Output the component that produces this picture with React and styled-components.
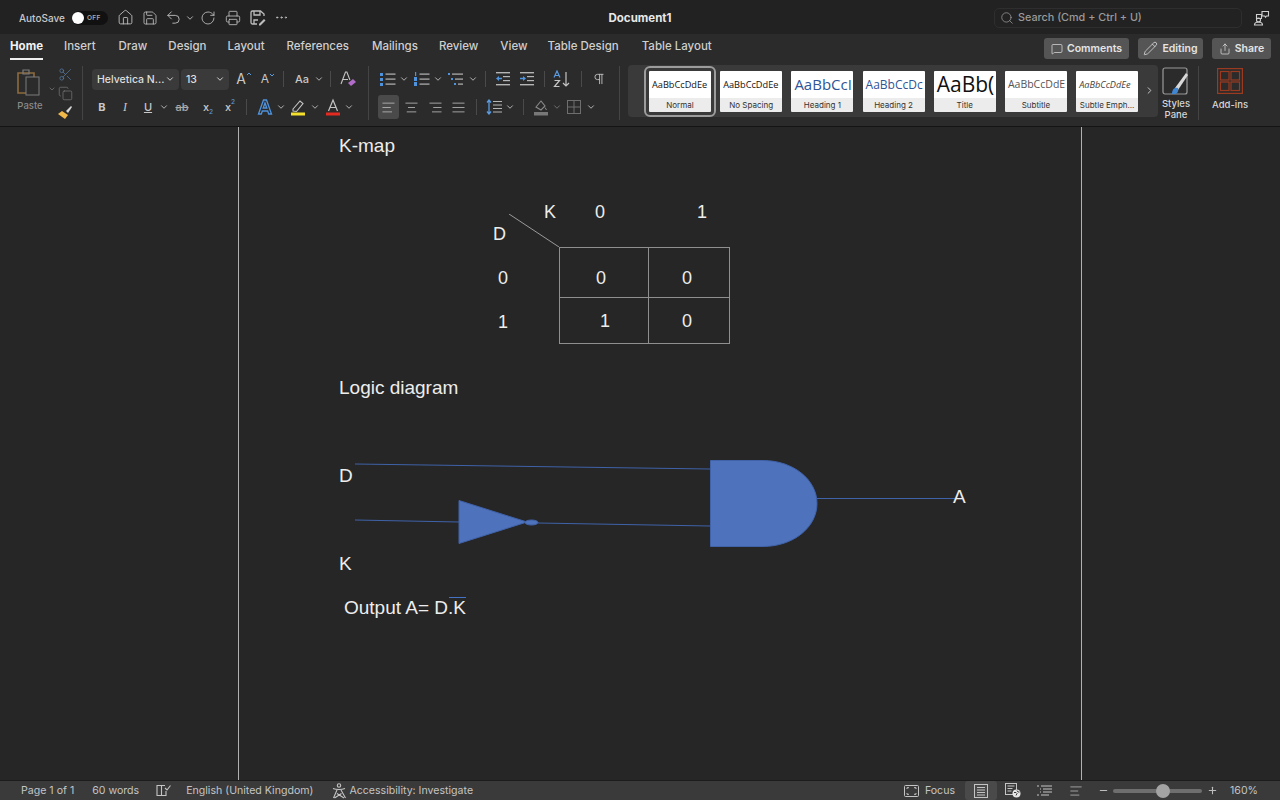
import React from "react";
import styled, { createGlobalStyle } from "styled-components";
import {
  House,
  Save,
  Undo2,
  RotateCw,
  Printer,
  Ellipsis,
  Search,
  MessageSquare,
  Pencil,
  Share,
  ChevronDown,
  ChevronRight,
  Scissors,
  Copy,
  AlignLeft,
  AlignCenter,
  AlignRight,
  AlignJustify,
  Pilcrow,
  Minus,
  Plus,
} from "lucide-react";

const GlobalStyle = createGlobalStyle`
  html, body {
    margin: 0;
    height: 100%;
    background: #262626;
    overflow: hidden;
  }
  body {
    font-family: Inter, "Liberation Sans", sans-serif;
    -webkit-font-smoothing: antialiased;
  }
`;

const Window = styled.div`
  width: 1280px;
  height: 800px;
  display: flex;
  flex-direction: column;
  overflow: hidden;
`;

/* title bar */
const TitleBar = styled.header`
  height: 34px;
  flex: none;
  box-sizing: border-box;
  padding: 1px 0 0 19px;
  background: #222222;
  display: flex;
  align-items: center;
  color: #c9c9c9;
  position: relative;
`;

const AutoSave = styled.span`
  font-size: 10px;
  font-weight: 500;
  width: 53px;
`;

const Toggle = styled.div`
  width: 36px;
  height: 14px;
  border-radius: 7px;
  background: #111;
  display: flex;
  align-items: center;
  gap: 3px;
  margin-right: 4px;
  color: #aaa;
  font-size: 6.5px;
  font-weight: 600;
  letter-spacing: 0.3px;
`;

const Knob = styled.span`
  width: 12px;
  height: 12px;
  border-radius: 50%;
  background: #fff;
`;

const Slot = styled.div`
  width: ${(p) => p.$w}px;
  height: ${(p) => p.$h || 24}px;
  flex: none;
  display: flex;
  align-items: center;
  justify-content: center;
  color: ${(p) => p.$color || "#bdbdbd"};
  background: ${(p) => (p.$active ? "#4a4a4a" : "transparent")};
  border-radius: ${(p) => (p.$active ? "3px" : "0")};
  opacity: ${(p) => p.$dim || 1};
  & > svg {
    flex: none;
  }
`;

const PushRight = styled.div`
  margin-left: auto;
`;

const DocName = styled.div`
  position: absolute;
  left: 0;
  right: 0;
  text-align: center;
  font-size: 11.5px;
  font-weight: 700;
  color: #e8e8e8;
  pointer-events: none;
`;

const SearchBox = styled.div`
  margin-left: auto;
  width: 248px;
  height: 20px;
  box-sizing: border-box;
  border: 1px solid #2e2e2e;
  border-radius: 5px;
  display: flex;
  align-items: center;
  gap: 4px;
  padding-left: 5px;
  font-size: 10.8px;
  font-weight: 500;
  color: #9a9a9a;
`;

const CollabSlot = styled.div`
  width: 38px;
  display: flex;
  justify-content: center;
  color: #d0d0d0;
`;

/* tabs */
const TabBar = styled.nav`
  height: 28px;
  flex: none;
  background: #2b2b2b;
  display: flex;
  align-items: flex-start;
  padding: 0 9px 0 10px;
`;

const Tab = styled.div`
  height: 22px;
  margin-top: 2px;
  margin-right: ${(p) => p.$gap}px;
  font-size: 11.5px;
  line-height: 20px;
  font-weight: ${(p) => (p.$active ? 700 : 500)};
  color: ${(p) => (p.$active ? "#f2f2f2" : "#cfcfcf")};
  border-bottom: 2px solid ${(p) => (p.$active ? "#efefef" : "transparent")};
  white-space: nowrap;
`;

const TabActions = styled.div`
  margin-left: auto;
  display: flex;
  gap: 9px;
  padding-top: 4px;
`;

const ActionButton = styled.div`
  width: ${(p) => p.$w}px;
  height: 21px;
  background: #555555;
  border-radius: 3px;
  display: flex;
  align-items: center;
  justify-content: center;
  gap: 4px;
  font-size: 10.5px;
  font-weight: 600;
  color: #e4e4e4;
`;

/* ribbon */
const Ribbon = styled.section`
  height: 65px;
  flex: none;
  box-sizing: border-box;
  background: #2b2b2b;
  border-bottom: 1px solid #141414;
  display: flex;
  align-items: flex-start;
`;

const Clipboard = styled.div`
  width: 82px;
  flex: none;
  height: 56px;
  margin-top: 4px;
  padding-left: 12px;
  box-sizing: border-box;
  display: flex;
`;

const PasteBlock = styled.div`
  width: 36px;
  flex: none;
  display: flex;
  flex-direction: column;
  align-items: center;
  color: #8a8a8a;
  font-size: 9.5px;
  font-weight: 500;
  gap: 4px;
  padding-top: 2px;
`;

const PasteChevron = styled.div`
  width: 8px;
  flex: none;
  padding-top: 11px;
  color: #7c7c7c;
`;

const ClipTools = styled.div`
  width: 18px;
  flex: none;
  padding-top: 1px;
  display: flex;
  flex-direction: column;
  align-items: center;
  gap: 4px;
  color: #7c7c7c;
`;

const GroupLine = styled.div`
  width: 1px;
  height: 54px;
  margin-top: 4px;
  flex: none;
  background: #444;
`;

const Group = styled.div`
  width: ${(p) => p.$w}px;
  margin-left: ${(p) => p.$left}px;
  flex: none;
  display: flex;
  flex-direction: column;
  gap: 4px;
  padding-top: 5px;
`;

const ToolRow = styled.div`
  display: flex;
  align-items: center;
  height: 24px;
`;

const Select = styled.div`
  width: ${(p) => p.$w}px;
  height: 21px;
  margin-right: ${(p) => p.$mr || 0}px;
  flex: none;
  box-sizing: border-box;
  background: #3a3a3a;
  border-radius: 4px;
  padding: 0 4px 0 5px;
  display: flex;
  align-items: center;
  justify-content: space-between;
  font-size: 10.5px;
  font-weight: 500;
  color: #dedede;
`;

const TinySep = styled.span`
  width: 1px;
  height: 16px;
  background: #4a4a4a;
`;

const Letter = styled.span`
  font-family: ${(p) => (p.$serif ? '"Liberation Serif", serif' : "Inter, sans-serif")};
  font-size: ${(p) => p.$size || 11}px;
  font-weight: ${(p) => p.$weight || 500};
  font-style: ${(p) => (p.$italic ? "italic" : "normal")};
  text-decoration: ${(p) => p.$deco || "none"};
  color: ${(p) => p.$color || "#c8c8c8"};
  position: relative;
  line-height: 1;
`;

const Script = styled.sub`
  position: absolute;
  left: 100%;
  ${(p) => (p.$up ? "top: -3px;" : "bottom: -3px;")}
  font-size: 6.5px;
  color: #5b9be0;
  line-height: 1;
`;

const Caret = styled.svg`
  position: absolute;
  left: 100%;
  top: 0;
`;

const Gallery = styled.div`
  width: 530px;
  height: 52px;
  margin: 3px 0 0 8px;
  flex: none;
  box-sizing: border-box;
  background: #3a3a3a;
  border-radius: 4px;
  display: flex;
  align-items: center;
  gap: 9.2px;
  padding-left: 21px;
  position: relative;
`;

const StyleCard = styled.div`
  width: 62px;
  height: 41px;
  flex: none;
  background: linear-gradient(#ffffff 65%, #ececec 65%);
  border-radius: 1px;
  display: flex;
  flex-direction: column;
  align-items: center;
  overflow: hidden;
  outline: ${(p) => (p.$selected ? "2px solid #9c9c9c" : "none")};
  outline-offset: 3px;
`;

const StylePreview = styled.div`
  height: 27px;
  width: 100%;
  box-sizing: border-box;
  display: flex;
  align-items: center;
  padding-left: 3px;
  white-space: nowrap;
  overflow: hidden;
  font-family: "Open Sans", "Liberation Sans", sans-serif;
  font-size: ${(p) => p.$size}px;
  font-style: ${(p) => (p.$italic ? "italic" : "normal")};
  color: ${(p) => p.$color};
`;

const StyleName = styled.div`
  font-size: 8px;
  font-weight: 400;
  color: #333;
  line-height: 14px;
  white-space: nowrap;
`;

const GalleryMore = styled.div`
  position: absolute;
  right: 3px;
  top: 20px;
  color: #d0d0d0;
  display: flex;
`;

const PaneButton = styled.div`
  width: 36px;
  margin-right: 4px;
  flex: none;
  padding-top: 5px;
  display: flex;
  flex-direction: column;
  align-items: center;
  text-align: center;
  font-size: 9.5px;
  font-weight: 500;
  line-height: 11px;
  color: #d6d6d6;
`;

const PaneIconBox = styled.div`
  height: 31px;
`;

const AddinsButton = styled(PaneButton)`
  width: 62px;
  margin: 0;
  padding-top: 6px;
`;

/* document */
const DocArea = styled.main`
  flex: 1;
  min-height: 0;
  background: #262626;
  padding-left: 238px;
`;

const Page = styled.article`
  width: 844px;
  height: 100%;
  box-sizing: border-box;
  border-left: 1px solid #b0b0b0;
  border-right: 1px solid #b0b0b0;
  padding: 7px 0 0 100px;
  font-family: "Liberation Sans", Arial, sans-serif;
  color: #ededed;
`;

const Heading = styled.p`
  margin: 0;
  font-size: 19px;
  line-height: 24px;
`;

const KMap = styled.div`
  margin: 42px 0 32px 156px;
  display: grid;
  grid-template-columns: 64px 89px 82px;
  grid-template-rows: 47px 51px 46px;
  font-size: 18px;
`;

const Corner = styled.div`
  position: relative;
`;

const CornerLabel = styled.span`
  position: absolute;
  left: ${(p) => p.$x}px;
  top: ${(p) => p.$y}px;
  line-height: 22px;
`;

const Diagonal = styled.svg`
  position: absolute;
  left: 14px;
  top: 14px;
`;

const HeadCell = styled.div`
  padding: 1px 0 0 ${(p) => p.$pad}px;
  line-height: 22px;
`;

const SideCell = styled.div`
  display: flex;
  align-items: center;
  padding-left: 3px;
  padding-top: ${(p) => (p.$top ? 12 : 2)}px;
`;

const Cell = styled.div`
  display: flex;
  align-items: center;
  padding-left: ${(p) => p.$pad}px;
  padding-top: ${(p) => (p.$top ? 12 : 2)}px;
  border: solid #8f8f8f;
  border-width: ${(p) => (p.$top ? "1px" : "0")} ${(p) => (p.$right ? "1px" : "0")} 1px 1px;
`;

const Diagram = styled.div`
  position: relative;
  width: 640px;
  height: 190px;
  margin-top: 40px;
`;

const Wires = styled.svg`
  position: absolute;
  inset: 0;
`;

const PinLabel = styled.span`
  position: absolute;
  left: ${(p) => p.$x}px;
  top: ${(p) => p.$y}px;
  font-size: 19px;
  line-height: 22px;
`;

const Formula = styled.p`
  margin: -34px 0 0 5px;
  font-size: 19px;
  line-height: 24px;
`;

const Barred = styled.span`
  border-top: 1px solid #4472c4;
  display: inline-block;
  margin-left: -4px;
  padding-left: 4px;
  line-height: 20px;
  height: 20px;
`;

/* status bar */
const StatusBar = styled.footer`
  height: 20px;
  flex: none;
  box-sizing: border-box;
  background: #3a3a3a;
  border-top: 1px solid #1c1c1c;
  display: flex;
  align-items: center;
  font-size: 10.6px;
  color: #c4c4c4;
  padding-left: 21px;
`;

const StatusText = styled.span`
  margin-left: ${(p) => p.$ml || 0}px;
  margin-right: ${(p) => p.$mr || 0}px;
  white-space: nowrap;
`;

const ZoomTrack = styled.div`
  width: 89px;
  height: 4px;
  border-radius: 2px;
  background: #6e6e6e;
  position: relative;
  flex: none;
`;

const ZoomThumb = styled.span`
  position: absolute;
  left: 43px;
  top: -5px;
  width: 14px;
  height: 14px;
  border-radius: 50%;
  background: #a3a3a3;
`;

const Chev = ({ size = 10 }) => <ChevronDown size={size} strokeWidth={2.2} />;

const GrowFont = ({ size, down }) => (
  <Letter $size={size} $weight={400}>
    A
    <Caret width="6" height="4" viewBox="0 0 6 4" fill="none">
      <path d={down ? "M1 1l2 2 2-2" : "M1 3l2-2 2 2"} stroke="#5b9be0" strokeWidth="1" />
    </Caret>
  </Letter>
);

const CollabIcon = () => (
  <svg width="17" height="17" viewBox="0 0 17 17" fill="none" stroke="currentColor" strokeWidth="1.1">
    <path d="M9 2.500h6.500v4.500h-2l-1 1.200-.7-1.200h-2.800z" />
    <path d="M3.500 5.500h5v4h-5z" />
    <circle cx="5.500" cy="11" r="2" />
    <path d="M1.500 16c0-2 1.600-3 4-3s4 1 4 3z" />
  </svg>
);

const FileEdit = () => (
  <svg width="17" height="17" viewBox="0 0 17 17" fill="none" stroke="currentColor" strokeWidth="1.3">
    <path d="M8 15H3.500A1.500 1.500 0 0 1 2 13.500v-10A1.500 1.500 0 0 1 3.500 2h8L15 5v2" />
    <path d="M5 2v4h6V2M5 15v-4h4" />
    <path d="m10 15 5-5 1.500 1.500-5 5H10z" fill="currentColor" stroke="none" />
  </svg>
);

const BlueLetterA = () => (
  <svg width="18" height="18" viewBox="0 0 18 18" fill="none">
    <path d="M2.500 16 7.500 2h3l5 14h-2.800l-1-3H6.300l-1 3zM7.200 10h3.600L9 5z" stroke="#4f93de" strokeWidth="1.3" />
  </svg>
);

const Highlighter = () => (
  <svg width="16" height="18" viewBox="0 0 16 18" fill="none">
    <path d="M3 11 10 3l3 2.500-6.500 8L3 13z" stroke="#c4c4c4" strokeWidth="1.1" />
    <rect x="1" y="14.500" width="14" height="3" fill="#f5e12d" />
  </svg>
);

const FontColor = () => (
  <svg width="16" height="18" viewBox="0 0 16 18" fill="none">
    <path d="M3.500 13 8 2l4.500 11M5 9.500h6" stroke="#c4c4c4" strokeWidth="1.2" />
    <rect x="1" y="14.500" width="14" height="3" fill="#e32b21" />
  </svg>
);

const ClearFormat = () => (
  <svg width="18" height="18" viewBox="0 0 18 18" fill="none">
    <path d="M2 14 6.500 2h1.400l3 8M4 9.500h5" stroke="#c4c4c4" strokeWidth="1.1" />
    <path d="m9 13 5-4 3 3-5 4z" fill="#b06cc8" />
  </svg>
);

const Bullets = () => (
  <svg width="16" height="15" viewBox="0 0 16 15">
    {[2, 7, 12].map((y) => (
      <g key={y}>
        <rect x="0" y={y - 1} width="3" height="3" fill="#4f93de" />
        <rect x="5.500" y={y - 0.5} width="10" height="1.2" fill="#b5b5b5" />
      </g>
    ))}
  </svg>
);

const Numbered = () => (
  <svg width="16" height="15" viewBox="0 0 16 15">
    {[2, 7, 12].map((y, i) => (
      <g key={y}>
        <rect x={i === 0 ? 1 : 0} y={y - 2} width={i === 0 ? 1.2 : 3} height="4" fill="#4f93de" />
        <rect x="5.500" y={y - 0.5} width="10" height="1.2" fill="#b5b5b5" />
      </g>
    ))}
  </svg>
);

const MultiLevel = () => (
  <svg width="16" height="15" viewBox="0 0 16 15">
    <rect x="0" y="1" width="2" height="2" fill="#4f93de" />
    <rect x="4" y="1.500" width="11" height="1.2" fill="#b5b5b5" />
    <rect x="3" y="6" width="2" height="2" fill="#4f93de" />
    <rect x="7" y="6.500" width="8" height="1.2" fill="#b5b5b5" />
    <rect x="6" y="11" width="2" height="2" fill="#4f93de" />
    <rect x="10" y="11.500" width="5" height="1.2" fill="#b5b5b5" />
  </svg>
);

const Indent = ({ flip }) => (
  <svg width="14" height="14" viewBox="0 0 14 14">
    <rect y="0" width="14" height="1.4" fill="#b5b5b5" />
    <rect x="7" y="4" width="7" height="1.2" fill="#b5b5b5" />
    <rect x="7" y="8" width="7" height="1.2" fill="#b5b5b5" />
    <rect y="12" width="14" height="1.4" fill="#b5b5b5" />
    <path d={flip ? "M6 6.500 3 4v1.800H0v1.400h3V9z" : "M0 6.500 3 4v1.800h3v1.400H3V9z"} fill="#4f93de" />
  </svg>
);

const Sort = () => (
  <svg width="18" height="18" viewBox="0 0 18 18" fill="none">
    <path d="M1 7.500 4 1l3 6.500M2 5.500h4" stroke="#5b9be0" strokeWidth="1.2" />
    <path d="M1.500 10.500h5L1.500 16.500h5" stroke="#c4c4c4" strokeWidth="1.2" />
    <path d="M13 2v14m-3-3 3 3 3-3" stroke="#c4c4c4" strokeWidth="1.2" />
  </svg>
);

const LineSpacing = () => (
  <svg width="16" height="16" viewBox="0 0 16 16" fill="none">
    <path d="M3 1v14M1 3.500 3 1l2 2.500M1 12.500 3 15l2-2.500" stroke="#5b9be0" strokeWidth="1.3" />
    <path d="M7 2.500h9M7 6h9M7 9.500h9M7 13h9" stroke="#b5b5b5" strokeWidth="1.2" />
  </svg>
);

const FillBucket = () => (
  <svg width="16" height="17" viewBox="0 0 16 17" fill="none">
    <path d="m3 8 5-6 4 5-4 4z" stroke="#8a8a8a" strokeWidth="1.1" />
    <path d="M12 8.500 13.500 11" stroke="#8a8a8a" />
    <rect x="1" y="13" width="14" height="3.500" fill="#787878" />
  </svg>
);

const Borders = () => (
  <svg width="14" height="14" viewBox="0 0 14 14" fill="none" stroke="#6e6e6e">
    <rect x="0.500" y="0.500" width="13" height="13" />
    <path d="M7 0v14M0 7h14" />
  </svg>
);

const Strike = () => (
  <Letter $size={11} $color="#a8a8a8" $deco="line-through">
    ab
  </Letter>
);

const PasteIcon = () => (
  <svg width="26" height="28" viewBox="0 0 26 28" fill="none">
    <path d="M1 5h16v20H1z" stroke="#8d6b3c" strokeWidth="1.6" />
    <path d="M6 2h6v4H6z" stroke="#7c7c7c" strokeWidth="1.2" />
    <rect x="9" y="9" width="13" height="18" fill="#2b2b2b" stroke="#7c7c7c" />
  </svg>
);

const BrushIcon = () => (
  <svg width="16" height="15" viewBox="0 0 16 15" fill="none">
    <path d="m1 9 7 5 3-4-6-4z" fill="#f1b84a" />
    <path d="m9 6 5-5 1 1-4 6z" fill="#d8d8d8" />
  </svg>
);

const StylesPaneIcon = () => (
  <svg width="28" height="28" viewBox="0 0 28 28" fill="none">
    <rect x="1" y="1" width="24" height="26" rx="2" stroke="#9a9a9a" strokeWidth="1.2" />
    <path d="m13 21 11-15 2 2-10 15z" fill="#d8d8d8" />
    <path d="M10 27c0-4 2-7 6-6 1 3-1 6-3 6z" fill="#3f86d4" />
  </svg>
);

const AddinsIcon = () => (
  <svg width="26" height="26" viewBox="0 0 26 26" fill="none" stroke="#9a3a20" strokeWidth="1.2">
    <rect x="0.600" y="0.600" width="24.800" height="24.800" />
    <rect x="3.500" y="3.500" width="8.500" height="8.500" />
    <rect x="14" y="3.500" width="8.500" height="8.500" />
    <rect x="3.500" y="14" width="8.500" height="8.500" />
    <rect x="14" y="14" width="8.500" height="8.500" />
  </svg>
);

const ProofIcon = () => (
  <svg width="15" height="13" viewBox="0 0 15 13" fill="none" stroke="#c4c4c4" strokeWidth="1.1">
    <path d="M1 1.500h4.500v10H1zM5.500 1.500H9M5.500 11.500H10V7" />
    <path d="M9 4l2 2 3.500-4.500" />
  </svg>
);

const A11yIcon = () => (
  <svg width="15" height="16" viewBox="0 0 15 16" fill="none" stroke="#c4c4c4" strokeWidth="1.1">
    <circle cx="7" cy="2.500" r="1.700" />
    <path d="M1 5.500c2 .8 3.500 1 6 1s4-.2 6-1M5 7l-3.500 8M9 7l4.500 8M5 10.500l7 4.500M9.500 10.500l-7 4.500" />
  </svg>
);

const FocusIcon = () => (
  <svg width="15" height="12" viewBox="0 0 15 12" fill="none" stroke="#c4c4c4">
    <rect x="0.500" y="0.500" width="14" height="11" rx="1" />
    <path d="M3 4V2.700h2M10 2.700h2V4M3 8v1.300h2M10 9.300h2V8" />
  </svg>
);

const PrintLayout = () => (
  <svg width="14" height="14" viewBox="0 0 14 14" fill="none" stroke="#c4c4c4">
    <rect x="0.500" y="0.500" width="13" height="13" />
    <path d="M3 3.500h8M3 6h8M3 8.500h8M3 11h8" />
  </svg>
);

const WebLayout = () => (
  <svg width="16" height="15" viewBox="0 0 16 15" fill="none">
    <rect x="0.500" y="0.500" width="11" height="11" stroke="#c4c4c4" />
    <path d="M2.500 3h7M2.500 5.500h5M2.500 8h4" stroke="#c4c4c4" />
    <circle cx="11.500" cy="10.500" r="4" fill="#e6e6e6" />
    <path d="M9 9.500h2l1 1-1 2M12 7.500l1 1.500h1.500" stroke="#3a3a3a" />
  </svg>
);

const OutlineView = () => (
  <svg width="15" height="12" viewBox="0 0 15 12" fill="none" stroke="#c4c4c4" strokeWidth="1.1">
    <path d="M0 1h2M4 1h11M3 4h1M6 4h9M3 7h1M6 7h9M0 10h2M4 10h8" />
  </svg>
);

const tabs = [
  ["Home", 21],
  ["Insert", 23],
  ["Draw", 21],
  ["Design", 21],
  ["Layout", 22],
  ["References", 23],
  ["Mailings", 21],
  ["Review", 22],
  ["View", 20],
  ["Table Design", 23],
  ["Table Layout", 0],
];

const styleCards = [
  { name: "Normal", sample: "AaBbCcDdEe", size: 9.2, color: "#111", selected: true },
  { name: "No Spacing", sample: "AaBbCcDdEe", size: 9.2, color: "#111" },
  { name: "Heading 1", sample: "AaBbCcI", size: 15, color: "#2f5597" },
  { name: "Heading 2", sample: "AaBbCcDc", size: 12, color: "#2f5597" },
  { name: "Title", sample: "AaBb(", size: 21, color: "#111" },
  { name: "Subtitle", sample: "AaBbCcDdE", size: 10.5, color: "#555" },
  { name: "Subtle Emph...", sample: "AaBbCcDdEe", size: 9.2, color: "#444", italic: true },
];

const App = () => {
  return (
    <Window>
      <GlobalStyle />
      <TitleBar>
        <AutoSave>AutoSave</AutoSave>
        <Toggle>
          <Knob />
          OFF
        </Toggle>
        <Slot $w={26}><House size={17} strokeWidth={1.3} /></Slot>
        <Slot $w={23}><Save size={16} strokeWidth={1.3} /></Slot>
        <Slot $w={24}><Undo2 size={17} strokeWidth={1.3} /></Slot>
        <Slot $w={10}><Chev /></Slot>
        <Slot $w={26}><RotateCw size={16} strokeWidth={1.3} /></Slot>
        <Slot $w={24}><Printer size={16} strokeWidth={1.3} /></Slot>
        <Slot $w={25}><FileEdit /></Slot>
        <Slot $w={23}><Ellipsis size={15} strokeWidth={1.6} /></Slot>
        <DocName>Document1</DocName>
        <SearchBox>
          <Search size={14} strokeWidth={1.3} />
          Search (Cmd + Ctrl + U)
        </SearchBox>
        <CollabSlot><CollabIcon /></CollabSlot>
      </TitleBar>

      <TabBar>
        {tabs.map(([name, gap], i) => (
          <Tab key={name} $gap={gap} $active={i === 0}>{name}</Tab>
        ))}
        <TabActions>
          <ActionButton $w={85}><MessageSquare size={12} strokeWidth={1.4} />Comments</ActionButton>
          <ActionButton $w={65}><Pencil size={15} strokeWidth={1.2} />Editing</ActionButton>
          <ActionButton $w={59}><Share size={12} strokeWidth={1.4} />Share</ActionButton>
        </TabActions>
      </TabBar>

      <Ribbon>
        <Clipboard>
          <PasteBlock>
            <PasteIcon />
            Paste
          </PasteBlock>
          <PasteChevron><Chev size={8} /></PasteChevron>
          <ClipTools>
            <Scissors size={15} strokeWidth={1.1} color="#5b7fa8" />
            <Copy size={15} strokeWidth={1.1} />
            <BrushIcon />
          </ClipTools>
        </Clipboard>
        <GroupLine />

        <Group $w={276} $left={9}>
          <ToolRow>
            <Select $w={87} $mr={2}>Helvetica N...<Chev /></Select>
            <Select $w={48}>13<Chev /></Select>
            <Slot $w={24}><GrowFont size={14} /></Slot>
            <Slot $w={24}><GrowFont size={12} down /></Slot>
            <Slot $w={12}><TinySep /></Slot>
            <Slot $w={26}><Letter $size={11}>Aa</Letter></Slot>
            <Slot $w={8}><Chev /></Slot>
            <Slot $w={14}><TinySep /></Slot>
            <Slot $w={22}><ClearFormat /></Slot>
          </ToolRow>
          <ToolRow>
            <Slot $w={20}><Letter $weight={700}>B</Letter></Slot>
            <Slot $w={26}><Letter $italic $serif $size={12}>I</Letter></Slot>
            <Slot $w={20}><Letter $deco="underline">U</Letter></Slot>
            <Slot $w={12}><Chev /></Slot>
            <Slot $w={24}><Strike /></Slot>
            <Slot $w={24}><Letter>x<Script>2</Script></Letter></Slot>
            <Slot $w={20}><Letter>x<Script $up>2</Script></Letter></Slot>
            <Slot $w={16}><TinySep /></Slot>
            <Slot $w={22}><BlueLetterA /></Slot>
            <Slot $w={10}><Chev /></Slot>
            <Slot $w={24}><Highlighter /></Slot>
            <Slot $w={10}><Chev /></Slot>
            <Slot $w={26}><FontColor /></Slot>
            <Slot $w={6}><Chev /></Slot>
          </ToolRow>
        </Group>
        <GroupLine />

        <Group $w={241} $left={9}>
          <ToolRow>
            <Slot $w={20}><Bullets /></Slot>
            <Slot $w={12}><Chev /></Slot>
            <Slot $w={24}><Numbered /></Slot>
            <Slot $w={8}><Chev /></Slot>
            <Slot $w={28}><MultiLevel /></Slot>
            <Slot $w={6}><Chev /></Slot>
            <Slot $w={18}><TinySep /></Slot>
            <Slot $w={18}><Indent /></Slot>
            <Slot $w={30}><Indent flip /></Slot>
            <Slot $w={4}><TinySep /></Slot>
            <Slot $w={32}><Sort /></Slot>
            <Slot $w={6}><TinySep /></Slot>
            <Slot $w={30}><Pilcrow size={14} strokeWidth={1.6} /></Slot>
          </ToolRow>
          <ToolRow>
            <Slot $w={21} $active><AlignLeft size={15} strokeWidth={1.3} /></Slot>
            <Slot $w={24}><AlignCenter size={15} strokeWidth={1.3} /></Slot>
            <Slot $w={24}><AlignRight size={15} strokeWidth={1.3} /></Slot>
            <Slot $w={22}><AlignJustify size={15} strokeWidth={1.3} /></Slot>
            <Slot $w={14}><TinySep /></Slot>
            <Slot $w={22}><LineSpacing /></Slot>
            <Slot $w={10}><Chev /></Slot>
            <Slot $w={16}><TinySep /></Slot>
            <Slot $w={20}><FillBucket /></Slot>
            <Slot $w={12} $dim={0.5}><Chev /></Slot>
            <Slot $w={22}><Borders /></Slot>
            <Slot $w={12}><Chev /></Slot>
          </ToolRow>
        </Group>
        <GroupLine />

        <Gallery>
          {styleCards.map((card) => (
            <StyleCard key={card.name} $selected={card.selected}>
              <StylePreview $size={card.size} $color={card.color} $italic={card.italic}>
                {card.sample}
              </StylePreview>
              <StyleName>{card.name}</StyleName>
            </StyleCard>
          ))}
          <GalleryMore><ChevronRight size={11} strokeWidth={2} /></GalleryMore>
        </Gallery>
        <PaneButton>
          <PaneIconBox><StylesPaneIcon /></PaneIconBox>
          Styles
          <br />
          Pane
        </PaneButton>
        <GroupLine />
        <AddinsButton>
          <PaneIconBox><AddinsIcon /></PaneIconBox>
          Add-ins
        </AddinsButton>
      </Ribbon>

      <DocArea>
        <Page>
          <Heading>K-map</Heading>
          <KMap>
            <Corner>
              <CornerLabel $x={49} $y={1}>K</CornerLabel>
              <CornerLabel $x={-2} $y={23}>D</CornerLabel>
              <Diagonal width="50" height="33" viewBox="0 0 50 33">
                <path d="M0 0 50 33" stroke="#9a9a9a" fill="none" />
              </Diagonal>
            </Corner>
            <HeadCell $pad={36}>0</HeadCell>
            <HeadCell $pad={49}>1</HeadCell>
            <SideCell $top>0</SideCell>
            <Cell $top $pad={36}>0</Cell>
            <Cell $top $right $pad={33}>0</Cell>
            <SideCell>1</SideCell>
            <Cell $pad={40}>1</Cell>
            <Cell $right $pad={33}>0</Cell>
          </KMap>
          <Heading>Logic diagram</Heading>
          <Diagram>
            <Wires width="640" height="190" viewBox="339 440 640 190" fill="none">
              <path d="M355 464 710 469" stroke="#3f62a8" />
              <path d="M355 520 459 522" stroke="#3f62a8" />
              <path d="M538 523 710 526" stroke="#3f62a8" />
              <path d="M817 498.500H958" stroke="#3f62a8" />
              <path d="M459 500.500v43L527 522z" fill="#4f72bd" stroke="#3f62a8" />
              <ellipse cx="531.500" cy="522.500" rx="6.500" ry="2.500" fill="#4f72bd" stroke="#3f62a8" />
              <path d="M710.500 460.500H763c30 0 54 19 54 43s-24 43-54 43h-52.500z" fill="#4f72bd" stroke="#3f62a8" />
            </Wires>
            <PinLabel $x={0} $y={25}>D</PinLabel>
            <PinLabel $x={0} $y={113}>K</PinLabel>
            <PinLabel $x={614} $y={46}>A</PinLabel>
          </Diagram>
          <Formula>
            Output A= D.<Barred>K</Barred>
          </Formula>
        </Page>
      </DocArea>

      <StatusBar>
        <StatusText $mr={18}>Page 1 of 1</StatusText>
        <StatusText $mr={9}>60 words</StatusText>
        <Slot $w={30} $h={18}><ProofIcon /></Slot>
        <StatusText $ml={8} $mr={16}>English (United Kingdom)</StatusText>
        <Slot $w={20} $h={18}><A11yIcon /></Slot>
        <StatusText>Accessibility: Investigate</StatusText>

        <PushRight />
        <Slot $w={20} $h={18}><FocusIcon /></Slot>
        <StatusText $ml={3} $mr={10}>Focus</StatusText>
        <Slot $w={32} $h={19} $active><PrintLayout /></Slot>
        <Slot $w={32} $h={18}><WebLayout /></Slot>
        <Slot $w={30} $h={18}><OutlineView /></Slot>
        <Slot $w={34} $h={18}><AlignLeft size={14} strokeWidth={1.3} /></Slot>
        <Slot $w={20} $h={18}><Minus size={11} strokeWidth={2.4} /></Slot>
        <ZoomTrack><ZoomThumb /></ZoomTrack>
        <Slot $w={20} $h={18}><Plus size={11} strokeWidth={2.4} /></Slot>
        <StatusText $ml={8} $mr={22}>160%</StatusText>
      </StatusBar>
    </Window>
  );
};

export default App;
